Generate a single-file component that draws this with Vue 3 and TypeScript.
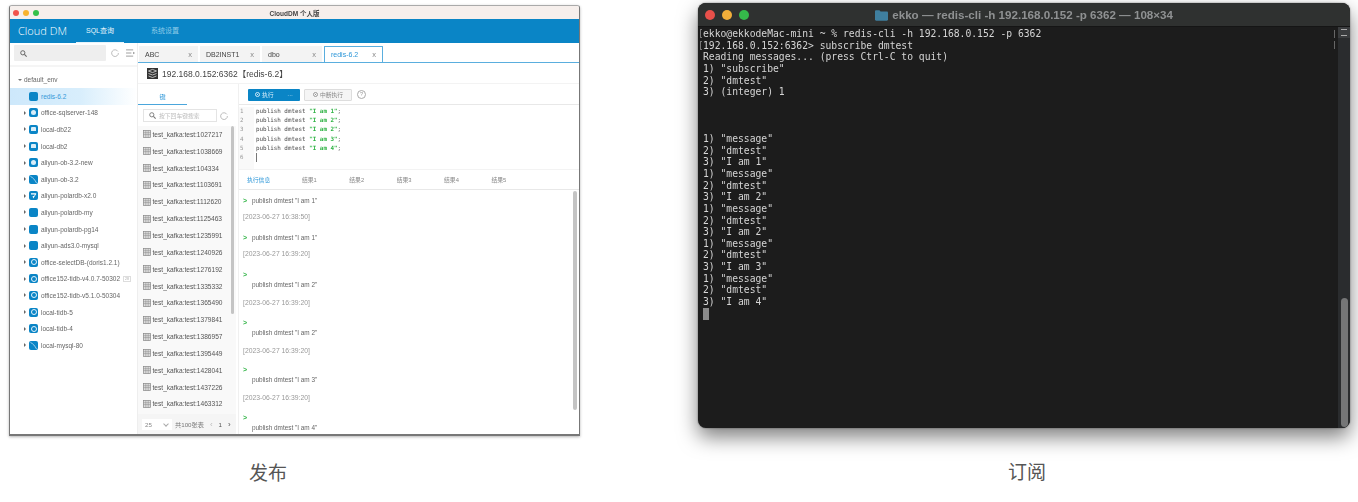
<script setup lang="ts">
type Conn = { name: string; icon: string; badge?: boolean }
const conns: Conn[] = [
  { name: 'office-sqlserver-148', icon: 'circle' },
  { name: 'local-db22', icon: 'doc' },
  { name: 'local-db2', icon: 'doc' },
  { name: 'aliyun-ob-3.2-new', icon: 'circle' },
  { name: 'aliyun-ob-3.2', icon: 'fin' },
  { name: 'aliyun-polardb-x2.0', icon: 'polar' },
  { name: 'aliyun-polardb-my', icon: 'blank' },
  { name: 'aliyun-polardb-pg14', icon: 'blank' },
  { name: 'aliyun-ads3.0-mysql', icon: 'blank' },
  { name: 'office-selectDB-(doris1.2.1)', icon: 'ring' },
  { name: 'office152-tidb-v4.0.7-50302', icon: 'ring', badge: true },
  { name: 'office152-tidb-v5.1.0-50304', icon: 'ring' },
  { name: 'local-tidb-5', icon: 'ring' },
  { name: 'local-tidb-4', icon: 'ring' },
  { name: 'local-mysql-80', icon: 'fin' },
]
const keys = ['1027217','1038669','104334','1103691','1112620','1125463','1235991','1240926','1276192','1335332','1365490','1379841','1386957','1395449','1428041','1437226','1463312']
const tabs = [
  { name: 'ABC', w: 59 }, { name: 'DB2INST1', w: 60 }, { name: 'dbo', w: 60 }, { name: 'redis-6.2', w: 59, active: true },
]
const code = [1, 2, 2, 3, 4]
const logs = [
  { inline: true, text: 'publish dmtest "I am 1"', time: '[2023-06-27 16:38:50]' },
  { inline: true, text: 'publish dmtest "I am 1"', time: '[2023-06-27 16:39:20]' },
  { inline: false, text: 'publish dmtest "I am 2"', time: '[2023-06-27 16:39:20]' },
  { inline: false, text: 'publish dmtest "I am 2"', time: '[2023-06-27 16:39:20]' },
  { inline: false, text: 'publish dmtest "I am 3"', time: '[2023-06-27 16:39:20]' },
  { inline: false, text: 'publish dmtest "I am 4"', time: '' },
]
const termLines = [
  'ekko@ekkodeMac-mini ~ % redis-cli -h 192.168.0.152 -p 6362',
  '192.168.0.152:6362> subscribe dmtest',
  'Reading messages... (press Ctrl-C to quit)',
  '1) "subscribe"', '2) "dmtest"', '3) (integer) 1', '', '', '',
  '1) "message"', '2) "dmtest"', '3) "I am 1"',
  '1) "message"', '2) "dmtest"', '3) "I am 2"',
  '1) "message"', '2) "dmtest"', '3) "I am 2"',
  '1) "message"', '2) "dmtest"', '3) "I am 3"',
  '1) "message"', '2) "dmtest"', '3) "I am 4"',
]
</script>

<template>
  <div class="page">
    <section class="col col-left">
      <div class="app">
        <div class="mac-bar">
          <i class="dot red"></i><i class="dot yellow"></i><i class="dot green"></i>
          <span class="mac-title">CloudDM 个人版</span>
        </div>
        <header class="head">
          <span class="logo">Cloud DM</span>
          <span class="nav nav-on">SQL查询</span>
          <span class="nav">系统设置</span>
        </header>
        <div class="body">
          <aside class="side">
            <div class="side-search">
              <div class="search-box">
                <svg width="7" height="7" viewBox="0 0 10 10"><circle cx="4" cy="4" r="3" fill="none" stroke="#666" stroke-width="1.4"/><path d="M6.3 6.3 9.5 9.500" stroke="#666" stroke-width="1.6"/></svg>
              </div>
              <svg class="refresh" width="8" height="8" viewBox="0 0 10 10"><path d="M8.6 3A4.2 4.2 0 1 0 9.2 5" fill="none" stroke="#999" stroke-width=".8"/></svg>
              <svg class="listic" width="9" height="8" viewBox="0 0 10 9"><path d="M0 1h8M0 4.5h6M0 8h8" stroke="#888" stroke-width=".9"/><path d="M8 3.2l2 1.3-2 1.300z" fill="#888"/></svg>
            </div>
            <div class="env"><i class="tri-down"></i>default_env</div>
            <div class="conn conn-on"><span class="cicon"></span><span class="cname on-name">redis-6.2</span></div>
            <div v-for="c in conns" :key="c.name" class="conn">
              <i class="tri-right"></i>
              <span class="cicon">
                <i v-if="c.icon === 'circle'" class="g-circle"></i>
                <i v-else-if="c.icon === 'ring'" class="g-ring"></i>
                <i v-else-if="c.icon === 'doc'" class="g-doc"></i>
                <svg v-else-if="c.icon === 'fin'" width="9" height="9" viewBox="0 0 9 9"><path d="M1.5 1.5C4 2.5 6 5 7.5 8" fill="none" stroke="#bfe0f2" stroke-width=".8"/></svg>
                <svg v-else-if="c.icon === 'polar'" width="9" height="9" viewBox="0 0 9 9"><path d="M2 2.200h4.600c.6 0 .8.6.5 1.100L4.200 7.400 3.600 5h1.600l.6-1.400H2z" fill="#fff"/></svg>
              </span>
              <span class="cname">{{ c.name }}</span>
              <span v-if="c.badge" class="badge">28</span>
            </div>
          </aside>
          <main class="main">
            <div class="tabs">
              <div v-for="t in tabs" :key="t.name" class="tab" :class="{ 'tab-on': t.active }" :style="{ width: t.w + 'px' }">
                <span>{{ t.name }}</span><span class="x">x</span>
              </div>
            </div>
            <div class="conn-head">
              <svg width="11" height="11" viewBox="0 0 11 11"><rect width="11" height="11" fill="#333"/><path d="M1.500 3 5.500 1.400 9.500 3 5.500 4.600zM1.500 5.500 5.500 7l4-1.500M1.500 8l4 1.500L9.500 8" fill="none" stroke="#ddd" stroke-width=".8"/></svg>
              <span>192.168.0.152:6362【redis-6.2】</span>
            </div>
            <div class="work">
              <div class="keys">
                <div class="keys-tab"><span>键</span></div>
                <div class="keys-search">
                  <div class="ks-box">
                    <svg width="7" height="7" viewBox="0 0 10 10"><circle cx="4" cy="4" r="3" fill="none" stroke="#777" stroke-width="1.3"/><path d="M6.300 6.300 9.500 9.500" stroke="#777" stroke-width="1.500"/></svg>
                    <span>按下回车键搜索</span>
                  </div>
                  <svg width="8" height="8" viewBox="0 0 10 10"><path d="M8.600 3A4.200 4.200 0 1 0 9.200 5" fill="none" stroke="#999" stroke-width=".8"/></svg>
                </div>
                <div class="key-list">
                  <div v-for="k in keys" :key="k" class="key">
                    <svg width="8" height="8" viewBox="0 0 8 8"><rect x=".4" y=".4" width="7.200" height="7.200" fill="#ddd" stroke="#888" stroke-width=".7"/><path d="M.4 2.700h7.200M.4 4.600h7.200M2.800.4v7.200M5.200.4v7.200" stroke="#888" stroke-width=".5"/></svg>
                    <span>test_kafka:test:{{ k }}</span>
                  </div>
                  <i class="key-thumb"></i>
                </div>
                <div class="pager">
                  <span class="size">25<i class="chev"></i></span>
                  <span>共100张表</span>
                  <span class="pg-nav">‹</span><span class="pg-n">1</span><span class="pg-nav dark">›</span>
                </div>
              </div>
              <div class="right">
                <div class="toolbar">
                  <div class="run"><span class="ring-ic"></span>执行<span class="more">···</span></div>
                  <div class="stop"><span class="ring-ic gray"></span>中断执行</div>
                  <span class="help">?</span>
                </div>
                <div class="editor">
                  <div class="gutter"><div v-for="n in 6" :key="n">{{ n }}</div></div>
                  <div class="code">
                    <div v-for="(c, i) in code" :key="i">publish dmtest <b>"I am {{ c }}"</b>;</div>
                    <div><i class="caret"></i></div>
                  </div>
                </div>
                <div class="rtabs">
                  <span class="rt on">执行信息</span>
                  <span v-for="n in 5" :key="n" class="rt">结果{{ n }}</span>
                </div>
                <div class="log">
                  <div v-for="(l, i) in logs" :key="i" class="entry" :class="l.inline ? 'inl' : 'blk'">
                    <div class="cmd"><span class="gt">&gt;</span><span class="txt">{{ l.text }}</span></div>
                    <div v-if="l.time" class="time">{{ l.time }}</div>
                  </div>
                  <i class="log-thumb"></i>
                </div>
              </div>
            </div>
          </main>
        </div>
      </div>
      <div class="cap cap-l">发布</div>
    </section>

    <section class="col col-right">
      <div class="term">
        <div class="term-bar">
          <i class="tdot tred"></i><i class="tdot tyellow"></i><i class="tdot tgreen"></i>
          <span class="term-title">
            <svg width="13" height="11" viewBox="0 0 13 11"><path d="M0 1.500C0 .7.5.3 1.200.3h3.200l1.200 1.300h6.200c.7 0 1.200.5 1.200 1.200v6.700c0 .7-.5 1.200-1.200 1.200H1.200C.5 10.700 0 10.200 0 9.500z" fill="#3f7f9f"/></svg>
            ekko — redis-cli -h 192.168.0.152 -p 6362 — 108×34
          </span>
        </div>
        <div class="term-body">
          <div class="term-text">
            <div v-for="(l, i) in termLines" :key="i" class="tl"><i v-if="i < 2" class="brk"></i>{{ l }}</div>
            <div class="tl"><i class="cursor"></i></div>
            <i class="rmark m1"></i><i class="rmark m2"></i>
          </div>
          <div class="term-scroll">
            <div class="split"><i></i></div>
            <i class="term-thumb"></i>
          </div>
        </div>
      </div>
      <div class="cap cap-r">订阅</div>
    </section>
  </div>
</template>

<style>
html, body { margin: 0; background: #fff; overflow: hidden; }
</style>

<style scoped>
.page {
  width: 1358px; height: 502px; display: flex; align-items: flex-start; background: #fff;
  font-family: "Liberation Sans", "Noto Sans CJK SC", sans-serif; overflow: hidden;
}
.col { display: flex; flex-direction: column; }
.col-left { margin: 5px 0 0 9px; width: 571px; }
.col-right { margin: 3px 0 0 118px; width: 652px; }

.app {
  height: 431px; box-sizing: border-box; display: flex; flex-direction: column;
  border: 1px solid #777; border-bottom-width: 2px; border-top-color: #aaa; border-radius: 3px 3px 0 0;
  background: #fff; box-shadow: 0 1px 3px rgba(0,0,0,.3); overflow: hidden; filter: blur(.3px);
}
.mac-bar { height: 13px; flex: none; background: #f6efec; display: flex; align-items: center; padding-left: 3px; gap: 4px; position: relative; }
.dot { width: 6px; height: 6px; border-radius: 50%; }
.red { background: #f0544c; } .yellow { background: #f7b32f; } .green { background: #35c14a; }
.mac-title { position: absolute; left: 0; right: 0; text-align: center; font-size: 6.500px; font-weight: 700; color: #444; }

.head { height: 24px; flex: none; background: #0a85c6; display: flex; color: #fff; align-items: stretch; }
.logo { width: 66px; padding-left: 8px; box-sizing: border-box; font: 300 11px/23px "Open Sans", sans-serif; white-space: nowrap; }
.nav { width: 48px; text-align: center; font-size: 7px; line-height: 23px; color: #8fcbe8; }
.nav + .nav { margin-left: 17px; }
.nav-on { color: #e6f4fb; box-shadow: inset 0 -1px 0 #e6f4fb; }

.body { flex: 1; display: flex; min-height: 0; }
.side { width: 128px; flex: none; border-right: 1px solid #eee; box-sizing: border-box; }
.side-search { height: 24px; display: flex; align-items: center; padding: 0 0 2px 4px; box-sizing: border-box; border-bottom: 2px solid #f5f5f5; }
.search-box { width: 92px; height: 16px; background: #eeeeee; display: flex; align-items: center; padding-left: 6px; box-sizing: border-box; border-radius: 1px; }
.refresh { margin-left: 5px; }
.listic { margin-left: 7px; }
.env { height: 16.600px; margin-top: 4.400px; display: flex; align-items: center; padding-left: 8px; font-size: 6.500px; color: #666; }
.tri-down { width: 0; height: 0; border: 2px solid transparent; border-top: 2.500px solid #777; border-bottom: 0; margin-right: 2px; }
.conn { height: 16.600px; display: flex; align-items: center; position: relative; padding-left: 19px; font-size: 6.500px; color: #666; white-space: nowrap; }
.conn-on { background: linear-gradient(90deg, #cde8fb 0%, #d8eefc 55%, #fff 100%); }
.on-name { color: #3498d8; }
.tri-right { position: absolute; left: 14px; width: 0; height: 0; border: 2px solid transparent; border-left: 2.500px solid #666; border-right: 0; }
.cicon { width: 9px; height: 9px; background: #0a85c6; border-radius: 2px; margin-right: 3px; flex: none; display: flex; align-items: center; justify-content: center; }
.g-circle { width: 5px; height: 5px; background: #d9eef9; border-radius: 50%; }
.g-ring { width: 4px; height: 4px; border: 1px solid #e6f3fb; border-radius: 50%; }
.g-doc { width: 5px; height: 4px; background: #d9eef9; border-radius: 1px 1px 0 0; }
.badge { margin-left: 3px; border: 1px solid #ddd; font-size: 3.500px; color: #aaa; padding: 0 1px; line-height: 4px; }

.main { flex: 1; min-width: 0; display: flex; flex-direction: column; }
.tabs { flex: none; display: flex; align-items: flex-end; padding-left: 1px; gap: 1px; border-bottom: 1px solid #5aaede; height: 19px; }
.tab { height: 16px; box-sizing: border-box; background: #f3f3f3; padding: 0 6px; display: flex; align-items: center; justify-content: space-between; font-size: 7px; color: #444; margin-right: 1px; }
.tab .x { color: #888; font-size: 7.500px; }
.tab-on { background: #fff; color: #2c96d8; border: 1px solid #5aaede; border-bottom: 0; border-radius: 1px 1px 0 0; }
.conn-head { height: 20px; flex: none; display: flex; align-items: center; padding-left: 9px; gap: 4px; font-size: 8.500px; color: #444; border-bottom: 1px solid #f3f3f3; }

.work { flex: 1; display: flex; min-height: 0; }
.keys { width: 98px; flex: none; display: flex; flex-direction: column; }
.keys-tab { height: 21px; flex: none; box-sizing: border-box; }
.keys-tab span { display: block; width: 49px; height: 21px; box-sizing: border-box; line-height: 25px; text-align: center; font-size: 6.200px; color: #2c96d8; border-bottom: 1px solid #4aa6dc; }
.keys-search { height: 21px; flex: none; display: flex; align-items: center; padding-left: 5px; gap: 3px; }
.ks-box { width: 74px; height: 13px; box-sizing: border-box; border: 1px solid #e4e4e4; display: flex; align-items: center; padding-left: 5px; gap: 3px; font-size: 5.800px; color: #bbb; }
.key-list { flex: 1; position: relative; background: #f9f9f9; overflow: hidden; }
.key { height: 16.850px; display: flex; align-items: center; padding-left: 5px; gap: 1.500px; font-size: 6.600px; color: #555; white-space: nowrap; }
.key-thumb { position: absolute; left: 93px; top: 0; width: 3px; height: 188px; background: #c4c4c4; border-radius: 2px; }
.pager { height: 20px; flex: none; background: #f5f5f5; display: flex; align-items: center; padding-left: 4px; font-size: 6.200px; color: #777; }
.size { width: 30px; height: 11px; background: #fff; box-sizing: border-box; display: flex; align-items: center; justify-content: space-between; padding: 0 4px 0 3px; margin-right: 3px; color: #888; }
.chev { width: 3px; height: 3px; border-right: .6px solid #aaa; border-bottom: .6px solid #aaa; transform: rotate(45deg); }
.pg-nav { margin-left: 6px; color: #bbb; font-size: 8px; }
.pg-nav.dark { color: #555; }
.pg-n { margin-left: 6px; color: #555; }

.right { flex: 1; min-width: 0; margin-left: 2px; display: flex; flex-direction: column; border-left: 1px solid #f0f0f0; box-sizing: border-box; }
.toolbar { height: 21px; flex: none; display: flex; align-items: center; padding: 1px 0 0 9px; box-sizing: border-box; border-bottom: 1px solid #e8e8e8; background: #fff; }
.run { width: 52px; height: 12px; background: #0a85c6; border-radius: 1px; color: #d8eefa; font-size: 5.800px; display: flex; align-items: center; padding-left: 7px; box-sizing: border-box; gap: 2px; }
.more { margin-left: auto; margin-right: 7px; }
.ring-ic { width: 5px; height: 5px; box-sizing: border-box; border: .8px solid #cfe9f8; border-radius: 50%; background: radial-gradient(circle, #cfe9f8 35%, transparent 40%); }
.ring-ic.gray { border-color: #999; background: radial-gradient(circle, #999 35%, transparent 40%); }
.stop { width: 48px; height: 12px; margin-left: 4px; background: #f5f5f5; border: 1px solid #ddd; box-sizing: border-box; border-radius: 1px; font-size: 5.800px; color: #888; display: flex; align-items: center; justify-content: center; gap: 2px; }
.help { width: 7px; height: 7px; margin-left: 5px; border: .8px solid #aaa; border-radius: 50%; font-size: 5.500px; color: #999; text-align: center; line-height: 7px; }
.editor { height: 65px; flex: none; display: flex; border-bottom: 1px solid #f3f3f3; padding-top: 2px; box-sizing: border-box; }
.gutter { width: 15px; flex: none; background: #f9f9f9; padding-left: 1px; box-sizing: border-box; color: #999; font: 5.800px/9.200px "DejaVu Sans Mono", monospace; }
.code { padding-left: 2px; font: 5.900px/9.200px "DejaVu Sans Mono", monospace; color: #4a4a4a; white-space: pre; }
.code b { color: #2fb344; font-weight: 700; }
.caret { display: block; width: 1px; height: 9px; background: #777; }
.rtabs { height: 20px; flex: none; display: flex; align-items: center; border-bottom: 1px solid #e8e8e8; box-sizing: border-box; font-size: 5.800px; color: #888; padding-left: 8px; }
.rt { width: 47.400px; flex: none; padding-left: 7.500px; box-sizing: border-box; }
.rt.on { padding-left: 0; color: #2c96d8; }
.log { flex: 1; position: relative; overflow: hidden; font-size: 6.400px; color: #666; padding-left: 4px; }
.entry { box-sizing: border-box; }
.entry.inl { height: 37px; padding-top: 7px; }
.entry.blk { height: 47.600px; padding-top: 7px; }
.cmd { display: flex; line-height: 7px; }
.blk .cmd { display: block; }
.gt { color: #2fb344; font-weight: 700; font-size: 7px; width: 9px; display: block; }
.blk .txt { display: block; padding-left: 9px; margin-top: 3px; }
.time { margin-top: 9px; line-height: 7px; color: #999; font-size: 6.800px; }
.blk .time { margin-top: 11px; }
.log-thumb { position: absolute; right: 2px; top: 1px; width: 4px; height: 219px; background: #c4c4c4; border-radius: 2px; }

.cap { font-size: 19px; line-height: 24px; color: #555; text-align: center; }
.cap-l { width: 518px; margin-top: 26px; }
.cap-r { width: 658px; margin-top: 33px; }

.term {
  height: 425px; border-radius: 8px; background: #1c1c1c; display: flex; flex-direction: column;
  box-shadow: 0 9px 20px rgba(0,0,0,.5), 0 0 2px rgba(0,0,0,.5); overflow: hidden; filter: blur(.25px);
}
.term-bar { height: 23px; flex: none; background: #2f3130; border-bottom: 1px solid #151515; display: flex; align-items: center; padding-left: 7px; gap: 7px; position: relative; }
.tdot { width: 10px; height: 10px; border-radius: 50%; }
.tred { background: #e8504a; } .tyellow { background: #f2ae3a; } .tgreen { background: #35b94a; }
.term-title { position: absolute; left: 0; right: 0; text-align: center; font-size: 11.600px; font-weight: 700; color: #8f9192; white-space: nowrap; }
.term-title svg { vertical-align: -1.500px; margin-right: 1px; }
.term-body { flex: 1; display: flex; min-height: 0; }
.term-text { flex: 1; min-width: 0; position: relative; padding: 1px 0 0 5px; font: 9.700px/11.670px "DejaVu Sans Mono", monospace; color: #d5d5d5; white-space: pre; box-sizing: border-box; }
.tl { height: 11.670px; position: relative; }
.brk { position: absolute; left: -3px; top: 1px; width: 2px; height: 9px; box-sizing: border-box; border: 1px solid #777; border-right: 0; }
.cursor { display: block; width: 6px; height: 12px; background: #8a8a8a; }
.rmark { position: absolute; right: 3px; width: 1px; height: 8px; background: #666; }
.m1 { top: 3px; } .m2 { top: 14px; }
.term-scroll { width: 12px; flex: none; background: #2a2c2e; position: relative; }
.split { height: 11px; background: #3a3c3e; display: flex; align-items: center; justify-content: center; }
.split i { width: 6px; height: 5px; border-top: 1px solid #aaa; border-bottom: 1px solid #aaa; }
.term-thumb { position: absolute; left: 3px; right: 2px; bottom: 1px; height: 129px; background: #757677; border-radius: 4px; }
</style>
